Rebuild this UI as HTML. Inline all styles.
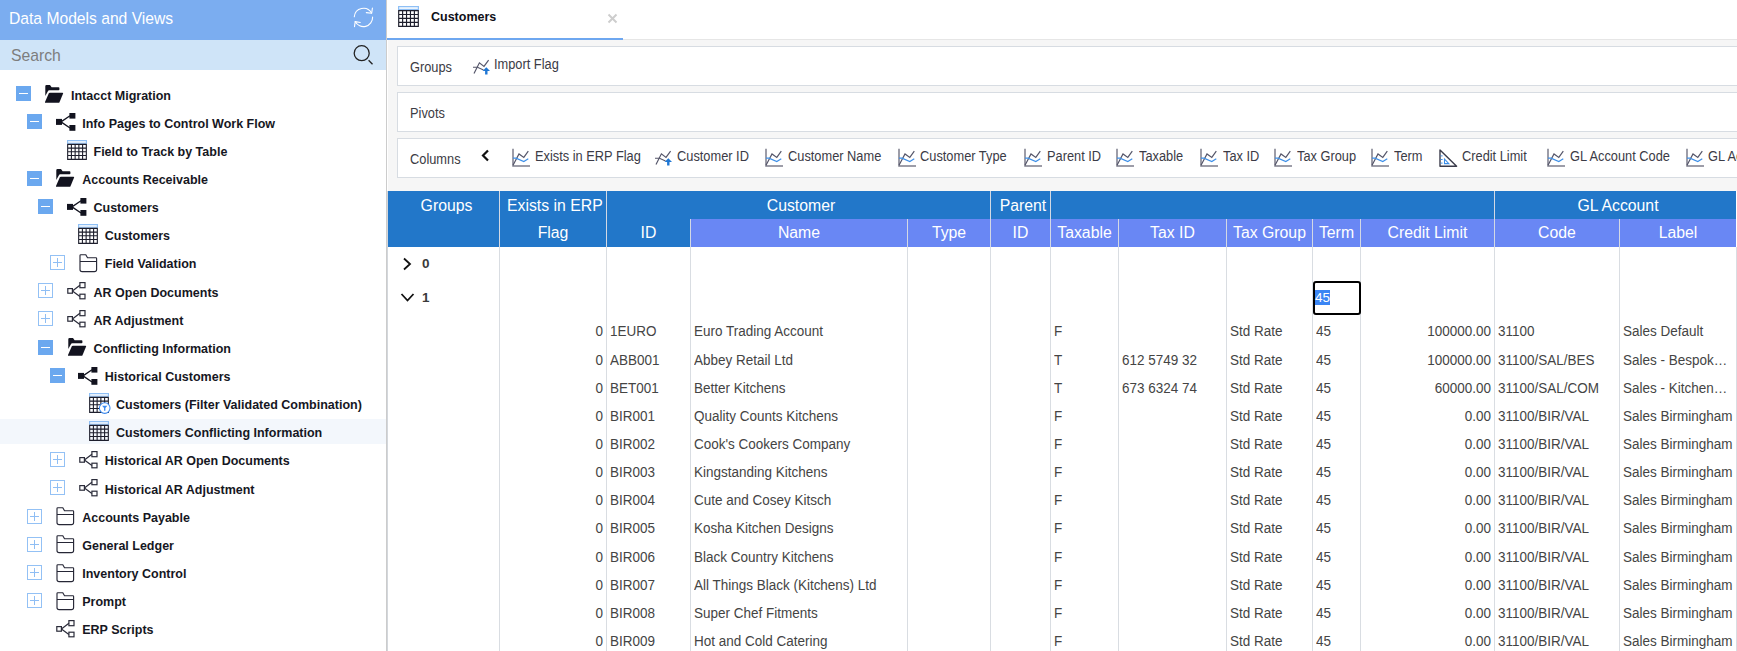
<!DOCTYPE html>
<html><head><meta charset="utf-8"><title>Customers</title>
<style>
*{box-sizing:border-box}
html,body{margin:0;padding:0}
body{width:1737px;height:651px;overflow:hidden;position:relative;background:#fff;font-family:"Liberation Sans",sans-serif}
.a{position:absolute}
.side{position:absolute;left:0;top:0;width:386px;height:651px;background:#fff}
.shd{position:absolute;left:0;top:0;width:386px;height:40px;background:#7badf0}
.shd .t{position:absolute;left:9px;top:-2px;line-height:40px;font-size:17.4px;color:#fff;white-space:nowrap;transform:scaleX(0.9);transform-origin:0 0}
.srch{position:absolute;left:0;top:40px;width:386px;height:30px;background:#cfe4f8}
.srch .t{position:absolute;left:11px;top:0px;line-height:30px;font-size:16.4px;color:#7d7d7d;transform:scaleX(0.96);transform-origin:0 0}
.sb{position:absolute;left:386px;top:0;width:1px;height:651px;background:#cccccc}
.sb2{position:absolute;left:387px;top:191px;width:1px;height:460px;background:#d3d7dc}
.tr{position:absolute;left:0;width:386px;height:28px}
.tr .tx{position:absolute;top:0;line-height:28px;font-size:12.5px;font-weight:bold;color:#161723;white-space:nowrap}
.tg{position:absolute;width:15px;height:15px}
.tg.m{background:#6ba8ef}
.tg.m:after{content:"";position:absolute;left:3px;top:7px;width:9px;height:1px;background:#fff}
.tg.p{border:1px solid #93c1f5;background:#fff}
.tg.p:before{content:"";position:absolute;left:2px;top:6px;width:9px;height:1px;background:#8fbef4}
.tg.p:after{content:"";position:absolute;left:6px;top:2px;width:1px;height:9px;background:#8fbef4}
.ic{position:absolute}
.main{position:absolute;left:388px;top:0;width:1349px;height:651px}
.tabbar{position:absolute;left:387px;top:0;width:1350px;height:40px;background:#fff;border-bottom:1px solid #e6e6e6}
.grey{position:absolute;left:388px;top:40px;width:1349px;height:151px;background:#f6f6f6}
.box{position:absolute;left:397px;width:1345px;height:40px;background:#fff;border:1px solid #d7dce2}
.box .lb{position:absolute;left:12px;top:1px;line-height:38px;font-size:14px;color:#3c3c44;white-space:nowrap;transform:scaleX(0.915);transform-origin:0 0}
.chip{position:absolute;white-space:nowrap;font-size:14px;color:#3b3b46;transform:scaleX(0.915);transform-origin:0 0}
.th{position:absolute;color:#fff;font-size:15.8px;text-align:center;white-space:nowrap;overflow:hidden}
.vd{position:absolute;width:1px;background:#d9dde2}
.hd{position:absolute;width:1px;background:#d3d9e4}
.cell{position:absolute;font-size:14px;color:#444;white-space:nowrap;line-height:32.2px;height:28px;transform:scaleX(0.963);transform-origin:0 0}
.cell.r{transform-origin:100% 0}
.r{text-align:right}
</style></head><body>

<div class="side">
<div class="shd"><div class="t">Data Models and Views</div><svg class="a" style="left:352px;top:6px" width="24" height="24" viewBox="0 0 24 24" fill="none" stroke="#fff" stroke-width="1.1" stroke-linecap="round" stroke-linejoin="round"><path d="M2.3 10.7 A9.2 9.2 0 0 1 19.5 7"/><path d="M14.3 6.6 L19.7 7.2 L20.4 2.1"/><path d="M20.6 11.1 A9.2 9.2 0 0 1 3.2 15.6"/><path d="M8.3 16.5 L3.2 15.6 L2.5 20.6"/></svg></div>
<div class="srch"><div class="t">Search</div><svg class="a" style="left:352px;top:4px" width="24" height="24" viewBox="0 0 24 24" fill="none" stroke="#222" stroke-width="1.3"><circle cx="9.7" cy="9.2" r="7.5"/><path d="M16.6 16.3 L20.5 20.2"/></svg></div>
<div class="a" style="left:0;top:419px;width:386px;height:25px;background:#f3f7fc"></div>
<div class="tr" style="top:81.00px;">
<div class="tg m" style="left:16px;top:5.3px"></div>
<svg class="ic" style="left:45.0px;top:4px" width="20" height="19" viewBox="0 0 20 19"><path fill="#12131f" d="M0.3 1.2 Q0.3 0 1.5 0 H5 L6.6 2.2 H13.6 Q14.4 2.2 14.4 3 V4.6 Q14.4 5.3 13.6 5.3 H4.2 Q3.3 5.3 2.9 6.2 L0.3 11 Z"/><path fill="#12131f" d="M3.8 8.3 Q4.2 7.8 4.8 7.8 H17.6 Q18.4 7.8 18.1 8.6 L14.5 17.2 Q14.2 17.8 13.5 17.8 H0.4 Q-0.3 17.8 0 17 Z"/></svg>
<div class="tx" style="left:71.00px;top:0.5px">Intacct Migration</div>
</div>
<div class="tr" style="top:109.15px;">
<div class="tg m" style="left:27px;top:5.3px"></div>
<svg class="ic" style="left:55.65px;top:4.2px" width="20" height="18" viewBox="0 0 20 18"><g fill="#12131f"><rect x="0" y="5.9" width="6" height="6"/><rect x="13.4" y="0" width="6" height="5.6"/><rect x="13.4" y="12" width="6" height="5.8"/></g><path d="M5 8.9 L14 2.8 M5 8.9 L14 15" stroke="#12131f" stroke-width="1.3" fill="none"/></svg>
<div class="tx" style="left:82.25px;top:0.5px">Info Pages to Control Work Flow</div>
</div>
<div class="tr" style="top:137.30px;">
<svg class="ic" style="left:66.5px;top:2.5px;overflow:visible" width="20" height="20" viewBox="0 0 21 21"><rect x="0" y="0" width="21" height="4" fill="#8ebff5"/><rect x="1.2" y="1.3" width="18.6" height="1.5" fill="#fff"/><path d="M0.7 4 V20.3 H20.3 V4 M4.62 4 V20.3 M8.54 4 V20.3 M12.46 4 V20.3 M16.38 4 V20.3 M0.7 4.6 H20.3 M0.7 8.5 H20.3 M0.7 12.4 H20.3 M0.7 16.35 H20.3" stroke="#1d1e2c" stroke-width="1.15" fill="none"/></svg>
<div class="tx" style="left:93.50px;top:0.5px">Field to Track by Table</div>
</div>
<div class="tr" style="top:165.45px;">
<div class="tg m" style="left:27px;top:5.3px"></div>
<svg class="ic" style="left:56.25px;top:4px" width="20" height="19" viewBox="0 0 20 19"><path fill="#12131f" d="M0.3 1.2 Q0.3 0 1.5 0 H5 L6.6 2.2 H13.6 Q14.4 2.2 14.4 3 V4.6 Q14.4 5.3 13.6 5.3 H4.2 Q3.3 5.3 2.9 6.2 L0.3 11 Z"/><path fill="#12131f" d="M3.8 8.3 Q4.2 7.8 4.8 7.8 H17.6 Q18.4 7.8 18.1 8.6 L14.5 17.2 Q14.2 17.8 13.5 17.8 H0.4 Q-0.3 17.8 0 17 Z"/></svg>
<div class="tx" style="left:82.25px;top:0.5px">Accounts Receivable</div>
</div>
<div class="tr" style="top:193.60px;">
<div class="tg m" style="left:38px;top:5.3px"></div>
<svg class="ic" style="left:66.9px;top:4.2px" width="20" height="18" viewBox="0 0 20 18"><g fill="#12131f"><rect x="0" y="5.9" width="6" height="6"/><rect x="13.4" y="0" width="6" height="5.6"/><rect x="13.4" y="12" width="6" height="5.8"/></g><path d="M5 8.9 L14 2.8 M5 8.9 L14 15" stroke="#12131f" stroke-width="1.3" fill="none"/></svg>
<div class="tx" style="left:93.50px;top:0.5px">Customers</div>
</div>
<div class="tr" style="top:221.75px;">
<svg class="ic" style="left:77.75px;top:2.5px;overflow:visible" width="20" height="20" viewBox="0 0 21 21"><rect x="0" y="0" width="21" height="4" fill="#8ebff5"/><rect x="1.2" y="1.3" width="18.6" height="1.5" fill="#fff"/><path d="M0.7 4 V20.3 H20.3 V4 M4.62 4 V20.3 M8.54 4 V20.3 M12.46 4 V20.3 M16.38 4 V20.3 M0.7 4.6 H20.3 M0.7 8.5 H20.3 M0.7 12.4 H20.3 M0.7 16.35 H20.3" stroke="#1d1e2c" stroke-width="1.15" fill="none"/></svg>
<div class="tx" style="left:104.75px;top:0.5px">Customers</div>
</div>
<div class="tr" style="top:249.90px;">
<div class="tg p" style="left:50px;top:5.3px"></div>
<svg class="ic" style="left:78.75px;top:4px" width="19" height="19" viewBox="0 0 19 19"><path d="M1 15.4 V1.5 Q1 0.7 1.8 0.7 H6.8 L8.5 3.7 H16.9 Q17.6 3.7 17.6 4.4 V15.4 Q17.6 17.6 15.4 17.6 H3.2 Q1 17.6 1 15.4 Z M1 7.5 H17.6" fill="none" stroke="#262736" stroke-width="1.15"/></svg>
<div class="tx" style="left:104.75px;top:0.5px">Field Validation</div>
</div>
<div class="tr" style="top:278.05px;">
<div class="tg p" style="left:38px;top:5.3px"></div>
<svg class="ic" style="left:66.3px;top:4px" width="20" height="18" viewBox="0 0 20 18"><g fill="none" stroke="#2b2c3a" stroke-width="1.2"><rect x="1.8" y="6.6" width="4.6" height="4.6"/><rect x="13.9" y="0.6" width="5.1" height="5.1"/><rect x="13.9" y="12.2" width="5.1" height="4.6"/><path d="M6.4 8.9 L13.9 3.3 M6.4 8.9 L13.9 14.4"/></g></svg>
<div class="tx" style="left:93.50px;top:0.5px">AR Open Documents</div>
</div>
<div class="tr" style="top:306.20px;">
<div class="tg p" style="left:38px;top:5.3px"></div>
<svg class="ic" style="left:66.3px;top:4px" width="20" height="18" viewBox="0 0 20 18"><g fill="none" stroke="#2b2c3a" stroke-width="1.2"><rect x="1.8" y="6.6" width="4.6" height="4.6"/><rect x="13.9" y="0.6" width="5.1" height="5.1"/><rect x="13.9" y="12.2" width="5.1" height="4.6"/><path d="M6.4 8.9 L13.9 3.3 M6.4 8.9 L13.9 14.4"/></g></svg>
<div class="tx" style="left:93.50px;top:0.5px">AR Adjustment</div>
</div>
<div class="tr" style="top:334.35px;">
<div class="tg m" style="left:38px;top:5.3px"></div>
<svg class="ic" style="left:67.5px;top:4px" width="20" height="19" viewBox="0 0 20 19"><path fill="#12131f" d="M0.3 1.2 Q0.3 0 1.5 0 H5 L6.6 2.2 H13.6 Q14.4 2.2 14.4 3 V4.6 Q14.4 5.3 13.6 5.3 H4.2 Q3.3 5.3 2.9 6.2 L0.3 11 Z"/><path fill="#12131f" d="M3.8 8.3 Q4.2 7.8 4.8 7.8 H17.6 Q18.4 7.8 18.1 8.6 L14.5 17.2 Q14.2 17.8 13.5 17.8 H0.4 Q-0.3 17.8 0 17 Z"/></svg>
<div class="tx" style="left:93.50px;top:0.5px">Conflicting Information</div>
</div>
<div class="tr" style="top:362.50px;">
<div class="tg m" style="left:50px;top:5.3px"></div>
<svg class="ic" style="left:78.15px;top:4.2px" width="20" height="18" viewBox="0 0 20 18"><g fill="#12131f"><rect x="0" y="5.9" width="6" height="6"/><rect x="13.4" y="0" width="6" height="5.6"/><rect x="13.4" y="12" width="6" height="5.8"/></g><path d="M5 8.9 L14 2.8 M5 8.9 L14 15" stroke="#12131f" stroke-width="1.3" fill="none"/></svg>
<div class="tx" style="left:104.75px;top:0.5px">Historical Customers</div>
</div>
<div class="tr" style="top:390.65px;">
<svg class="ic" style="left:89.0px;top:2.5px;overflow:visible" width="20" height="20" viewBox="0 0 21 21"><rect x="0" y="0" width="21" height="4" fill="#8ebff5"/><rect x="1.2" y="1.3" width="18.6" height="1.5" fill="#fff"/><path d="M0.7 4 V20.3 H20.3 V4 M4.62 4 V20.3 M8.54 4 V20.3 M12.46 4 V20.3 M16.38 4 V20.3 M0.7 4.6 H20.3 M0.7 8.5 H20.3 M0.7 12.4 H20.3 M0.7 16.35 H20.3" stroke="#1d1e2c" stroke-width="1.15" fill="none"/><circle cx="16.5" cy="15.8" r="5.6" fill="#fff" stroke="#3b8af0" stroke-width="1.1"/><path d="M13.7 13.3 H19.3 L17.2 15.8 V18.6 H15.8 V15.8 Z" fill="#3b8af0"/></svg>
<div class="tx" style="left:116.00px;top:0.5px">Customers (Filter Validated Combination)</div>
</div>
<div class="tr" style="top:418.80px;">
<svg class="ic" style="left:89.0px;top:2.5px;overflow:visible" width="20" height="20" viewBox="0 0 21 21"><rect x="0" y="0" width="21" height="4" fill="#8ebff5"/><rect x="1.2" y="1.3" width="18.6" height="1.5" fill="#fff"/><path d="M0.7 4 V20.3 H20.3 V4 M4.62 4 V20.3 M8.54 4 V20.3 M12.46 4 V20.3 M16.38 4 V20.3 M0.7 4.6 H20.3 M0.7 8.5 H20.3 M0.7 12.4 H20.3 M0.7 16.35 H20.3" stroke="#1d1e2c" stroke-width="1.15" fill="none"/></svg>
<div class="tx" style="left:116.00px;top:0.5px">Customers Conflicting Information</div>
</div>
<div class="tr" style="top:446.95px;">
<div class="tg p" style="left:50px;top:5.3px"></div>
<svg class="ic" style="left:77.55px;top:4px" width="20" height="18" viewBox="0 0 20 18"><g fill="none" stroke="#2b2c3a" stroke-width="1.2"><rect x="1.8" y="6.6" width="4.6" height="4.6"/><rect x="13.9" y="0.6" width="5.1" height="5.1"/><rect x="13.9" y="12.2" width="5.1" height="4.6"/><path d="M6.4 8.9 L13.9 3.3 M6.4 8.9 L13.9 14.4"/></g></svg>
<div class="tx" style="left:104.75px;top:0.5px">Historical AR Open Documents</div>
</div>
<div class="tr" style="top:475.10px;">
<div class="tg p" style="left:50px;top:5.3px"></div>
<svg class="ic" style="left:77.55px;top:4px" width="20" height="18" viewBox="0 0 20 18"><g fill="none" stroke="#2b2c3a" stroke-width="1.2"><rect x="1.8" y="6.6" width="4.6" height="4.6"/><rect x="13.9" y="0.6" width="5.1" height="5.1"/><rect x="13.9" y="12.2" width="5.1" height="4.6"/><path d="M6.4 8.9 L13.9 3.3 M6.4 8.9 L13.9 14.4"/></g></svg>
<div class="tx" style="left:104.75px;top:0.5px">Historical AR Adjustment</div>
</div>
<div class="tr" style="top:503.25px;">
<div class="tg p" style="left:27px;top:5.3px"></div>
<svg class="ic" style="left:56.25px;top:4px" width="19" height="19" viewBox="0 0 19 19"><path d="M1 15.4 V1.5 Q1 0.7 1.8 0.7 H6.8 L8.5 3.7 H16.9 Q17.6 3.7 17.6 4.4 V15.4 Q17.6 17.6 15.4 17.6 H3.2 Q1 17.6 1 15.4 Z M1 7.5 H17.6" fill="none" stroke="#262736" stroke-width="1.15"/></svg>
<div class="tx" style="left:82.25px;top:0.5px">Accounts Payable</div>
</div>
<div class="tr" style="top:531.40px;">
<div class="tg p" style="left:27px;top:5.3px"></div>
<svg class="ic" style="left:56.25px;top:4px" width="19" height="19" viewBox="0 0 19 19"><path d="M1 15.4 V1.5 Q1 0.7 1.8 0.7 H6.8 L8.5 3.7 H16.9 Q17.6 3.7 17.6 4.4 V15.4 Q17.6 17.6 15.4 17.6 H3.2 Q1 17.6 1 15.4 Z M1 7.5 H17.6" fill="none" stroke="#262736" stroke-width="1.15"/></svg>
<div class="tx" style="left:82.25px;top:0.5px">General Ledger</div>
</div>
<div class="tr" style="top:559.55px;">
<div class="tg p" style="left:27px;top:5.3px"></div>
<svg class="ic" style="left:56.25px;top:4px" width="19" height="19" viewBox="0 0 19 19"><path d="M1 15.4 V1.5 Q1 0.7 1.8 0.7 H6.8 L8.5 3.7 H16.9 Q17.6 3.7 17.6 4.4 V15.4 Q17.6 17.6 15.4 17.6 H3.2 Q1 17.6 1 15.4 Z M1 7.5 H17.6" fill="none" stroke="#262736" stroke-width="1.15"/></svg>
<div class="tx" style="left:82.25px;top:0.5px">Inventory Control</div>
</div>
<div class="tr" style="top:587.70px;">
<div class="tg p" style="left:27px;top:5.3px"></div>
<svg class="ic" style="left:56.25px;top:4px" width="19" height="19" viewBox="0 0 19 19"><path d="M1 15.4 V1.5 Q1 0.7 1.8 0.7 H6.8 L8.5 3.7 H16.9 Q17.6 3.7 17.6 4.4 V15.4 Q17.6 17.6 15.4 17.6 H3.2 Q1 17.6 1 15.4 Z M1 7.5 H17.6" fill="none" stroke="#262736" stroke-width="1.15"/></svg>
<div class="tx" style="left:82.25px;top:0.5px">Prompt</div>
</div>
<div class="tr" style="top:615.85px;">
<svg class="ic" style="left:55.05px;top:4px" width="20" height="18" viewBox="0 0 20 18"><g fill="none" stroke="#2b2c3a" stroke-width="1.2"><rect x="1.8" y="6.6" width="4.6" height="4.6"/><rect x="13.9" y="0.6" width="5.1" height="5.1"/><rect x="13.9" y="12.2" width="5.1" height="4.6"/><path d="M6.4 8.9 L13.9 3.3 M6.4 8.9 L13.9 14.4"/></g></svg>
<div class="tx" style="left:82.25px;top:0.5px">ERP Scripts</div>
</div>
</div>
<div class="sb"></div><div class="sb2"></div>
<div class="tabbar"></div>
<div class="a" style="left:387px;top:38px;width:236px;height:2px;background:#6ea7f0"></div>
<svg class="ic" style="left:398px;top:6px;overflow:visible" width="21" height="21" viewBox="0 0 21 21"><rect x="0" y="0" width="21" height="4" fill="#8ebff5"/><rect x="1.2" y="1.3" width="18.6" height="1.5" fill="#fff"/><path d="M0.7 4 V20.3 H20.3 V4 M4.62 4 V20.3 M8.54 4 V20.3 M12.46 4 V20.3 M16.38 4 V20.3 M0.7 4.6 H20.3 M0.7 8.5 H20.3 M0.7 12.4 H20.3 M0.7 16.35 H20.3" stroke="#1d1e2c" stroke-width="1.15" fill="none"/></svg>
<div class="a" style="left:431px;top:1px;line-height:33px;font-size:12.5px;font-weight:bold;color:#101018">Customers</div>
<svg class="a" style="left:607px;top:13px" width="11" height="11" viewBox="0 0 11 11"><path d="M1.5 1.5 L9.5 9.5 M9.5 1.5 L1.5 9.5" stroke="#cdcdcd" stroke-width="2"/></svg>
<div class="grey"></div>
<div class="box" style="top:46px"><div class="lb">Groups</div></div>
<div class="box" style="top:92px"><div class="lb">Pivots</div></div>
<div class="box" style="top:138px"><div class="lb">Columns</div></div>
<svg class="a" style="left:473px;top:58px" width="19" height="19" viewBox="0 0 19 19" fill="none"><path d="M1 15.5 L6.4 4.8 L11 8.4 L15.6 2.2" stroke="#55566a" stroke-width="1.2"/><path d="M0 9.3 H4.5 L10.5 12" stroke="#55566a" stroke-width="1.1"/><path d="M13.3 9.2 L17 13 H14.5 V16.6 H12.1 V13 H9.6 Z" fill="#1f77d4"/></svg>
<div class="chip" style="left:494px;top:56px;line-height:17px">Import Flag</div>
<svg class="a" style="left:480px;top:149px" width="11" height="13" viewBox="0 0 11 13"><path d="M8 1.5 L3 6.5 L8 11.5" stroke="#111" stroke-width="2.2" fill="none"/></svg>
<svg class="a" style="left:512px;top:148px" width="19" height="19" viewBox="0 0 19 19" fill="none"><path d="M1 0.8 V17.9 H18" stroke="#7d7e8c" stroke-width="1.5"/><path d="M1 17.2 L7 6 L11.8 9.4 L16.3 3.2" stroke="#55566a" stroke-width="1.2"/><path d="M1 10.2 H4 L11.8 13.5 L16.3 10.8" stroke="#3d8fe8" stroke-width="1.2"/></svg>
<div class="chip" style="left:535px;top:148px;line-height:17px">Exists in ERP Flag</div>
<svg class="a" style="left:655px;top:149px" width="19" height="19" viewBox="0 0 19 19" fill="none"><path d="M1 15.5 L6.4 4.8 L11 8.4 L15.6 2.2" stroke="#55566a" stroke-width="1.2"/><path d="M0 9.3 H4.5 L10.5 12" stroke="#55566a" stroke-width="1.1"/><path d="M13.3 9.2 L17 13 H14.5 V16.6 H12.1 V13 H9.6 Z" fill="#1f77d4"/></svg>
<div class="chip" style="left:677px;top:148px;line-height:17px">Customer ID</div>
<svg class="a" style="left:765px;top:148px" width="19" height="19" viewBox="0 0 19 19" fill="none"><path d="M1 0.8 V17.9 H18" stroke="#7d7e8c" stroke-width="1.5"/><path d="M1 17.2 L7 6 L11.8 9.4 L16.3 3.2" stroke="#55566a" stroke-width="1.2"/><path d="M1 10.2 H4 L11.8 13.5 L16.3 10.8" stroke="#3d8fe8" stroke-width="1.2"/></svg>
<div class="chip" style="left:788px;top:148px;line-height:17px">Customer Name</div>
<svg class="a" style="left:898px;top:148px" width="19" height="19" viewBox="0 0 19 19" fill="none"><path d="M1 0.8 V17.9 H18" stroke="#7d7e8c" stroke-width="1.5"/><path d="M1 17.2 L7 6 L11.8 9.4 L16.3 3.2" stroke="#55566a" stroke-width="1.2"/><path d="M1 10.2 H4 L11.8 13.5 L16.3 10.8" stroke="#3d8fe8" stroke-width="1.2"/></svg>
<div class="chip" style="left:920px;top:148px;line-height:17px">Customer Type</div>
<svg class="a" style="left:1024px;top:148px" width="19" height="19" viewBox="0 0 19 19" fill="none"><path d="M1 0.8 V17.9 H18" stroke="#7d7e8c" stroke-width="1.5"/><path d="M1 17.2 L7 6 L11.8 9.4 L16.3 3.2" stroke="#55566a" stroke-width="1.2"/><path d="M1 10.2 H4 L11.8 13.5 L16.3 10.8" stroke="#3d8fe8" stroke-width="1.2"/></svg>
<div class="chip" style="left:1047px;top:148px;line-height:17px">Parent ID</div>
<svg class="a" style="left:1116px;top:148px" width="19" height="19" viewBox="0 0 19 19" fill="none"><path d="M1 0.8 V17.9 H18" stroke="#7d7e8c" stroke-width="1.5"/><path d="M1 17.2 L7 6 L11.8 9.4 L16.3 3.2" stroke="#55566a" stroke-width="1.2"/><path d="M1 10.2 H4 L11.8 13.5 L16.3 10.8" stroke="#3d8fe8" stroke-width="1.2"/></svg>
<div class="chip" style="left:1139px;top:148px;line-height:17px">Taxable</div>
<svg class="a" style="left:1200px;top:148px" width="19" height="19" viewBox="0 0 19 19" fill="none"><path d="M1 0.8 V17.9 H18" stroke="#7d7e8c" stroke-width="1.5"/><path d="M1 17.2 L7 6 L11.8 9.4 L16.3 3.2" stroke="#55566a" stroke-width="1.2"/><path d="M1 10.2 H4 L11.8 13.5 L16.3 10.8" stroke="#3d8fe8" stroke-width="1.2"/></svg>
<div class="chip" style="left:1223px;top:148px;line-height:17px">Tax ID</div>
<svg class="a" style="left:1274px;top:148px" width="19" height="19" viewBox="0 0 19 19" fill="none"><path d="M1 0.8 V17.9 H18" stroke="#7d7e8c" stroke-width="1.5"/><path d="M1 17.2 L7 6 L11.8 9.4 L16.3 3.2" stroke="#55566a" stroke-width="1.2"/><path d="M1 10.2 H4 L11.8 13.5 L16.3 10.8" stroke="#3d8fe8" stroke-width="1.2"/></svg>
<div class="chip" style="left:1297px;top:148px;line-height:17px">Tax Group</div>
<svg class="a" style="left:1371px;top:148px" width="19" height="19" viewBox="0 0 19 19" fill="none"><path d="M1 0.8 V17.9 H18" stroke="#7d7e8c" stroke-width="1.5"/><path d="M1 17.2 L7 6 L11.8 9.4 L16.3 3.2" stroke="#55566a" stroke-width="1.2"/><path d="M1 10.2 H4 L11.8 13.5 L16.3 10.8" stroke="#3d8fe8" stroke-width="1.2"/></svg>
<div class="chip" style="left:1394px;top:148px;line-height:17px">Term</div>
<svg class="a" style="left:1439px;top:149px" width="19" height="19" viewBox="0 0 19 19" fill="none"><path d="M1 0.9 V17.2 H17.6 Z" stroke="#3a3b4a" stroke-width="1.4" stroke-linejoin="round"/><path d="M1.6 6.9 H3.6 M1.6 10.5 H3.6 M1.6 14.1 H3.6" stroke="#3d8fe8" stroke-width="1"/><path d="M5.5 10.2 V14.6 H9.8 Z" stroke="#3d8fe8" stroke-width="1.1"/></svg>
<div class="chip" style="left:1462px;top:148px;line-height:17px">Credit Limit</div>
<svg class="a" style="left:1547px;top:148px" width="19" height="19" viewBox="0 0 19 19" fill="none"><path d="M1 0.8 V17.9 H18" stroke="#7d7e8c" stroke-width="1.5"/><path d="M1 17.2 L7 6 L11.8 9.4 L16.3 3.2" stroke="#55566a" stroke-width="1.2"/><path d="M1 10.2 H4 L11.8 13.5 L16.3 10.8" stroke="#3d8fe8" stroke-width="1.2"/></svg>
<div class="chip" style="left:1570px;top:148px;line-height:17px">GL Account Code</div>
<svg class="a" style="left:1686px;top:148px" width="19" height="19" viewBox="0 0 19 19" fill="none"><path d="M1 0.8 V17.9 H18" stroke="#7d7e8c" stroke-width="1.5"/><path d="M1 17.2 L7 6 L11.8 9.4 L16.3 3.2" stroke="#55566a" stroke-width="1.2"/><path d="M1 10.2 H4 L11.8 13.5 L16.3 10.8" stroke="#3d8fe8" stroke-width="1.2"/></svg>
<div class="chip" style="left:1708px;top:148px;line-height:17px">GL Account Label</div>
<div class="a" style="left:388px;top:191px;width:1348px;height:56px;background:#2277c9"></div>
<div class="a" style="left:690px;top:219px;width:1046px;height:28px;background:#6987f4"></div>
<div class="hd" style="left:499px;top:191px;height:56px"></div>
<div class="hd" style="left:606px;top:191px;height:56px"></div>
<div class="hd" style="left:990px;top:191px;height:56px"></div>
<div class="hd" style="left:1050px;top:191px;height:56px"></div>
<div class="hd" style="left:1494px;top:191px;height:56px"></div>
<div class="hd" style="left:690px;top:219px;height:28px"></div>
<div class="hd" style="left:907px;top:219px;height:28px"></div>
<div class="hd" style="left:1118px;top:219px;height:28px"></div>
<div class="hd" style="left:1226px;top:219px;height:28px"></div>
<div class="hd" style="left:1312px;top:219px;height:28px"></div>
<div class="hd" style="left:1360px;top:219px;height:28px"></div>
<div class="hd" style="left:1619px;top:219px;height:28px"></div>
<div class="th" style="left:391.5px;top:192px;width:110.0px;line-height:28px">Groups</div>
<div class="th" style="left:507px;top:192px;line-height:28px;text-align:left;overflow:visible">Exists in ERP</div>
<div class="th" style="left:500px;top:219px;width:106px;line-height:28px">Flag</div>
<div class="th" style="left:609.5px;top:192px;width:383.0px;line-height:28px">Customer</div>
<div class="th" style="left:993.5px;top:192px;width:59.0px;line-height:28px">Parent</div>
<div class="th" style="left:1497.5px;top:192px;width:241.0px;line-height:28px">GL Account</div>
<div class="th" style="left:607px;top:219px;width:83px;line-height:28px">ID</div>
<div class="th" style="left:691px;top:219px;width:216px;line-height:28px">Name</div>
<div class="th" style="left:908px;top:219px;width:82px;line-height:28px">Type</div>
<div class="th" style="left:991px;top:219px;width:59px;line-height:28px">ID</div>
<div class="th" style="left:1051px;top:219px;width:67px;line-height:28px">Taxable</div>
<div class="th" style="left:1119px;top:219px;width:107px;line-height:28px">Tax ID</div>
<div class="th" style="left:1227px;top:219px;width:85px;line-height:28px">Tax Group</div>
<div class="th" style="left:1313px;top:219px;width:47px;line-height:28px">Term</div>
<div class="th" style="left:1361px;top:219px;width:133px;line-height:28px">Credit Limit</div>
<div class="th" style="left:1495px;top:219px;width:124px;line-height:28px">Code</div>
<div class="th" style="left:1620px;top:219px;width:116px;line-height:28px">Label</div>
<div class="vd" style="left:499px;top:247px;height:404px"></div>
<div class="vd" style="left:606px;top:247px;height:404px"></div>
<div class="vd" style="left:690px;top:247px;height:404px"></div>
<div class="vd" style="left:907px;top:247px;height:404px"></div>
<div class="vd" style="left:990px;top:247px;height:404px"></div>
<div class="vd" style="left:1050px;top:247px;height:404px"></div>
<div class="vd" style="left:1118px;top:247px;height:404px"></div>
<div class="vd" style="left:1226px;top:247px;height:404px"></div>
<div class="vd" style="left:1312px;top:247px;height:404px"></div>
<div class="vd" style="left:1360px;top:247px;height:404px"></div>
<div class="vd" style="left:1494px;top:247px;height:404px"></div>
<div class="vd" style="left:1619px;top:247px;height:404px"></div>
<div class="vd" style="left:1736px;top:247px;height:404px"></div>
<svg class="a" style="left:402px;top:257px" width="11" height="14" viewBox="0 0 11 14"><path d="M2 1.5 L8 7 L2 12.5" stroke="#111" stroke-width="1.8" fill="none"/></svg>
<div class="a" style="left:422px;top:247px;line-height:34px;font-size:13.5px;font-weight:bold;color:#3a3a3a">0</div>
<svg class="a" style="left:400px;top:292px" width="15" height="11" viewBox="0 0 15 11"><path d="M1.5 2 L7.5 8.5 L13.5 2" stroke="#111" stroke-width="1.8" fill="none"/></svg>
<div class="a" style="left:422px;top:281px;line-height:34px;font-size:13.5px;font-weight:bold;color:#3a3a3a">1</div>
<div class="a" style="left:1313px;top:281px;width:48px;height:34px;border:2px solid #000;border-radius:3px;background:#fff"></div>
<div class="a" style="left:1315px;top:290px;width:15px;height:15px;background:#3a85f4"></div>
<div class="a" style="left:1315px;top:281px;line-height:34px;font-size:13.5px;color:#fff">45</div>
<div class="cell r" style="left:499px;top:315.00px;width:104px">0</div>
<div class="cell" style="left:609.5px;top:315.00px">1EURO</div>
<div class="cell" style="left:693.5px;top:315.00px">Euro Trading Account</div>
<div class="cell" style="left:1053.5px;top:315.00px">F</div>
<div class="cell" style="left:1229.5px;top:315.00px">Std Rate</div>
<div class="cell" style="left:1315.5px;top:315.00px">45</div>
<div class="cell r" style="left:1360px;top:315.00px;width:131px">100000.00</div>
<div class="cell" style="left:1497.5px;top:315.00px">31100</div>
<div class="cell" style="left:1622.5px;top:315.00px">Sales Default</div>
<div class="cell r" style="left:499px;top:344.00px;width:104px">0</div>
<div class="cell" style="left:609.5px;top:344.00px">ABB001</div>
<div class="cell" style="left:693.5px;top:344.00px">Abbey Retail Ltd</div>
<div class="cell" style="left:1053.5px;top:344.00px">T</div>
<div class="cell" style="left:1121.5px;top:344.00px">612 5749 32</div>
<div class="cell" style="left:1229.5px;top:344.00px">Std Rate</div>
<div class="cell" style="left:1315.5px;top:344.00px">45</div>
<div class="cell r" style="left:1360px;top:344.00px;width:131px">100000.00</div>
<div class="cell" style="left:1497.5px;top:344.00px">31100/SAL/BES</div>
<div class="cell" style="left:1622.5px;top:344.00px">Sales - Bespok…</div>
<div class="cell r" style="left:499px;top:372.00px;width:104px">0</div>
<div class="cell" style="left:609.5px;top:372.00px">BET001</div>
<div class="cell" style="left:693.5px;top:372.00px">Better Kitchens</div>
<div class="cell" style="left:1053.5px;top:372.00px">T</div>
<div class="cell" style="left:1121.5px;top:372.00px">673 6324 74</div>
<div class="cell" style="left:1229.5px;top:372.00px">Std Rate</div>
<div class="cell" style="left:1315.5px;top:372.00px">45</div>
<div class="cell r" style="left:1360px;top:372.00px;width:131px">60000.00</div>
<div class="cell" style="left:1497.5px;top:372.00px">31100/SAL/COM</div>
<div class="cell" style="left:1622.5px;top:372.00px">Sales - Kitchen…</div>
<div class="cell r" style="left:499px;top:400.00px;width:104px">0</div>
<div class="cell" style="left:609.5px;top:400.00px">BIR001</div>
<div class="cell" style="left:693.5px;top:400.00px">Quality Counts Kitchens</div>
<div class="cell" style="left:1053.5px;top:400.00px">F</div>
<div class="cell" style="left:1229.5px;top:400.00px">Std Rate</div>
<div class="cell" style="left:1315.5px;top:400.00px">45</div>
<div class="cell r" style="left:1360px;top:400.00px;width:131px">0.00</div>
<div class="cell" style="left:1497.5px;top:400.00px">31100/BIR/VAL</div>
<div class="cell" style="left:1622.5px;top:400.00px">Sales Birmingham</div>
<div class="cell r" style="left:499px;top:428.00px;width:104px">0</div>
<div class="cell" style="left:609.5px;top:428.00px">BIR002</div>
<div class="cell" style="left:693.5px;top:428.00px">Cook's Cookers Company</div>
<div class="cell" style="left:1053.5px;top:428.00px">F</div>
<div class="cell" style="left:1229.5px;top:428.00px">Std Rate</div>
<div class="cell" style="left:1315.5px;top:428.00px">45</div>
<div class="cell r" style="left:1360px;top:428.00px;width:131px">0.00</div>
<div class="cell" style="left:1497.5px;top:428.00px">31100/BIR/VAL</div>
<div class="cell" style="left:1622.5px;top:428.00px">Sales Birmingham</div>
<div class="cell r" style="left:499px;top:456.00px;width:104px">0</div>
<div class="cell" style="left:609.5px;top:456.00px">BIR003</div>
<div class="cell" style="left:693.5px;top:456.00px">Kingstanding Kitchens</div>
<div class="cell" style="left:1053.5px;top:456.00px">F</div>
<div class="cell" style="left:1229.5px;top:456.00px">Std Rate</div>
<div class="cell" style="left:1315.5px;top:456.00px">45</div>
<div class="cell r" style="left:1360px;top:456.00px;width:131px">0.00</div>
<div class="cell" style="left:1497.5px;top:456.00px">31100/BIR/VAL</div>
<div class="cell" style="left:1622.5px;top:456.00px">Sales Birmingham</div>
<div class="cell r" style="left:499px;top:484.00px;width:104px">0</div>
<div class="cell" style="left:609.5px;top:484.00px">BIR004</div>
<div class="cell" style="left:693.5px;top:484.00px">Cute and Cosey Kitsch</div>
<div class="cell" style="left:1053.5px;top:484.00px">F</div>
<div class="cell" style="left:1229.5px;top:484.00px">Std Rate</div>
<div class="cell" style="left:1315.5px;top:484.00px">45</div>
<div class="cell r" style="left:1360px;top:484.00px;width:131px">0.00</div>
<div class="cell" style="left:1497.5px;top:484.00px">31100/BIR/VAL</div>
<div class="cell" style="left:1622.5px;top:484.00px">Sales Birmingham</div>
<div class="cell r" style="left:499px;top:512.00px;width:104px">0</div>
<div class="cell" style="left:609.5px;top:512.00px">BIR005</div>
<div class="cell" style="left:693.5px;top:512.00px">Kosha Kitchen Designs</div>
<div class="cell" style="left:1053.5px;top:512.00px">F</div>
<div class="cell" style="left:1229.5px;top:512.00px">Std Rate</div>
<div class="cell" style="left:1315.5px;top:512.00px">45</div>
<div class="cell r" style="left:1360px;top:512.00px;width:131px">0.00</div>
<div class="cell" style="left:1497.5px;top:512.00px">31100/BIR/VAL</div>
<div class="cell" style="left:1622.5px;top:512.00px">Sales Birmingham</div>
<div class="cell r" style="left:499px;top:541.00px;width:104px">0</div>
<div class="cell" style="left:609.5px;top:541.00px">BIR006</div>
<div class="cell" style="left:693.5px;top:541.00px">Black Country Kitchens</div>
<div class="cell" style="left:1053.5px;top:541.00px">F</div>
<div class="cell" style="left:1229.5px;top:541.00px">Std Rate</div>
<div class="cell" style="left:1315.5px;top:541.00px">45</div>
<div class="cell r" style="left:1360px;top:541.00px;width:131px">0.00</div>
<div class="cell" style="left:1497.5px;top:541.00px">31100/BIR/VAL</div>
<div class="cell" style="left:1622.5px;top:541.00px">Sales Birmingham</div>
<div class="cell r" style="left:499px;top:569.00px;width:104px">0</div>
<div class="cell" style="left:609.5px;top:569.00px">BIR007</div>
<div class="cell" style="left:693.5px;top:569.00px">All Things Black (Kitchens) Ltd</div>
<div class="cell" style="left:1053.5px;top:569.00px">F</div>
<div class="cell" style="left:1229.5px;top:569.00px">Std Rate</div>
<div class="cell" style="left:1315.5px;top:569.00px">45</div>
<div class="cell r" style="left:1360px;top:569.00px;width:131px">0.00</div>
<div class="cell" style="left:1497.5px;top:569.00px">31100/BIR/VAL</div>
<div class="cell" style="left:1622.5px;top:569.00px">Sales Birmingham</div>
<div class="cell r" style="left:499px;top:597.00px;width:104px">0</div>
<div class="cell" style="left:609.5px;top:597.00px">BIR008</div>
<div class="cell" style="left:693.5px;top:597.00px">Super Chef Fitments</div>
<div class="cell" style="left:1053.5px;top:597.00px">F</div>
<div class="cell" style="left:1229.5px;top:597.00px">Std Rate</div>
<div class="cell" style="left:1315.5px;top:597.00px">45</div>
<div class="cell r" style="left:1360px;top:597.00px;width:131px">0.00</div>
<div class="cell" style="left:1497.5px;top:597.00px">31100/BIR/VAL</div>
<div class="cell" style="left:1622.5px;top:597.00px">Sales Birmingham</div>
<div class="cell r" style="left:499px;top:625.00px;width:104px">0</div>
<div class="cell" style="left:609.5px;top:625.00px">BIR009</div>
<div class="cell" style="left:693.5px;top:625.00px">Hot and Cold Catering</div>
<div class="cell" style="left:1053.5px;top:625.00px">F</div>
<div class="cell" style="left:1229.5px;top:625.00px">Std Rate</div>
<div class="cell" style="left:1315.5px;top:625.00px">45</div>
<div class="cell r" style="left:1360px;top:625.00px;width:131px">0.00</div>
<div class="cell" style="left:1497.5px;top:625.00px">31100/BIR/VAL</div>
<div class="cell" style="left:1622.5px;top:625.00px">Sales Birmingham</div>
</body></html>
